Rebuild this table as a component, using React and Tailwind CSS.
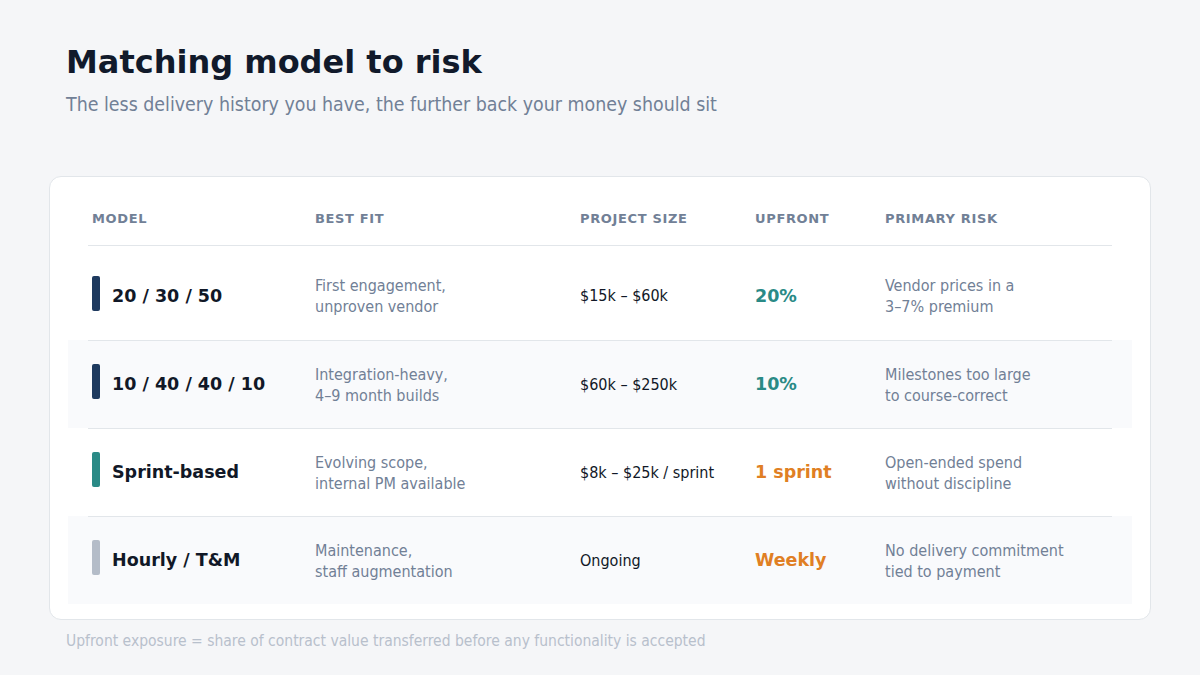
const rows = [
  {
    model: "20 / 30 / 50",
    bar: "bg-[#1e3a5f]",
    fit: ["First engagement,", "unproven vendor"],
    size: "$15k – $60k",
    upfront: "20%",
    upColor: "text-[#2a8a86]",
    risk: ["Vendor prices in a", "3–7% premium"],
  },
  {
    model: "10 / 40 / 40 / 10",
    bar: "bg-[#1e3a5f]",
    fit: ["Integration-heavy,", "4–9 month builds"],
    size: "$60k – $250k",
    upfront: "10%",
    upColor: "text-[#2a8a86]",
    risk: ["Milestones too large", "to course-correct"],
  },
  {
    model: "Sprint-based",
    bar: "bg-[#2a8a86]",
    fit: ["Evolving scope,", "internal PM available"],
    size: "$8k – $25k / sprint",
    upfront: "1 sprint",
    upColor: "text-[#e07f24]",
    risk: ["Open-ended spend", "without discipline"],
  },
  {
    model: "Hourly / T&M",
    bar: "bg-[#b4bcc8]",
    fit: ["Maintenance,", "staff augmentation"],
    size: "Ongoing",
    upfront: "Weekly",
    upColor: "text-[#e07f24]",
    risk: ["No delivery commitment", "tied to payment"],
  },
];

const condensed = { fontFamily: '"DejaVu Sans Condensed", "DejaVu Sans", sans-serif' };

const Lines = ({ lines }) => (
  <div className="text-[16px] leading-[21px] text-[#718096]" style={condensed}>
    {lines.map((l) => (
      <div key={l}>{l}</div>
    ))}
  </div>
);

const App = () => {
  return (
    <div
      className="h-[675px] w-[1200px] overflow-hidden bg-[#f5f6f8] px-[49px] pt-[43px]"
      style={{ fontFamily: '"DejaVu Sans", sans-serif' }}
    >
      <div className="pl-[17px]">
        <h1 className="text-[32px] font-bold leading-[38px] text-[#111a2b]">Matching model to risk</h1>
        <p className="mt-[12px] text-[19.4px] leading-[24px] text-[#718096]" style={condensed}>
          The less delivery history you have, the further back your money should sit
        </p>
      </div>

      <div className="mt-[59px] rounded-[12px] border border-[#e2e6ea] bg-white px-[18px] pb-[15px] pt-[19px]">
        <div className="mx-5 flex border-b border-[#e2e6ea] px-1 pb-[17px] pt-[14px] text-[13px] font-bold leading-[18px] tracking-[0.05em] text-[#718096]">
          <div className="w-[223px]">MODEL</div>
          <div className="w-[265px]">BEST FIT</div>
          <div className="w-[175px]">PROJECT SIZE</div>
          <div className="w-[130px]">UPFRONT</div>
          <div className="flex-1">PRIMARY RISK</div>
        </div>

        <div className="mt-[6px]">
          {rows.map((r, i) => (
            <div key={r.model} className={i % 2 === 1 ? "bg-[#f9fafc] px-5" : "px-5"}>
              <div
                className={
                  i === 0
                    ? "flex h-[88px] items-center px-1"
                    : "flex h-[88px] items-center border-t border-[#e2e6ea] px-1"
                }
              >
                <div className="flex w-[223px] items-center gap-3">
                  <span className={`mb-[6px] h-[35px] w-2 rounded-[2px] ${r.bar}`} />
                  <span className="text-[17.5px] font-bold text-[#111827]">{r.model}</span>
                </div>
                <div className="w-[265px]">
                  <Lines lines={r.fit} />
                </div>
                <div className="w-[175px] text-[16px] text-[#111827]" style={condensed}>
                  {r.size}
                </div>
                <div className={`w-[130px] text-[17.5px] font-bold ${r.upColor}`}>{r.upfront}</div>
                <div className="flex-1">
                  <Lines lines={r.risk} />
                </div>
              </div>
            </div>
          ))}
        </div>
      </div>

      <p className="mt-[12px] pl-[17px] text-[15.5px] leading-[18px] text-[#b8c0cc]" style={condensed}>
        Upfront exposure = share of contract value transferred before any functionality is accepted
      </p>
    </div>
  );
};

export default App;
